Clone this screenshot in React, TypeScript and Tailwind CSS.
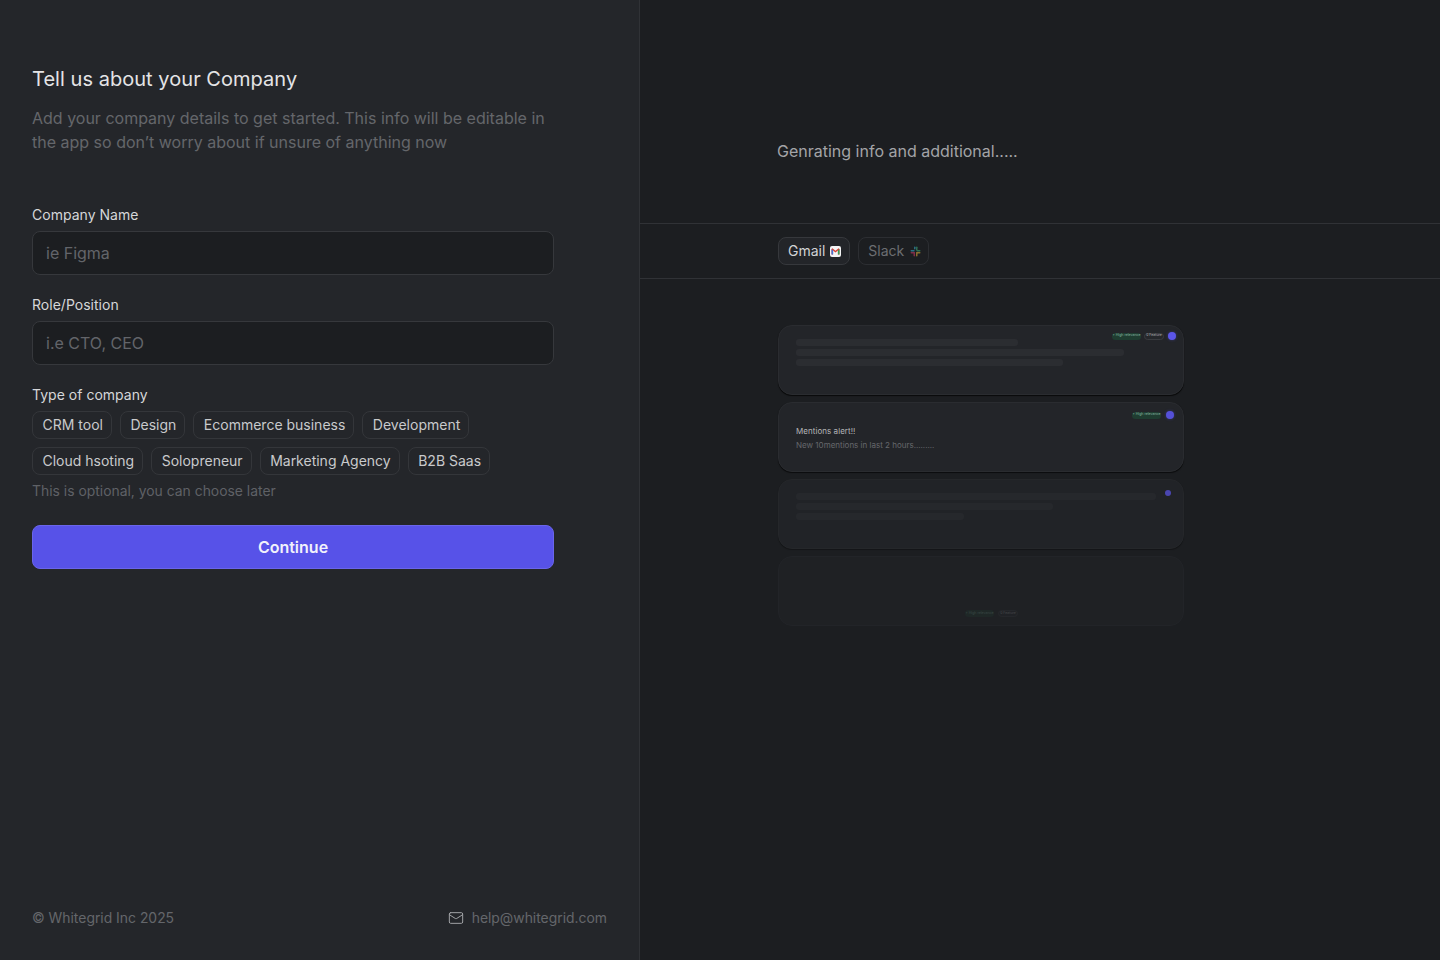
import React from "react";
import { Mail } from "lucide-react";

const row1 = ["CRM tool", "Design", "Ecommerce business", "Development"];
const row2 = ["Cloud hsoting", "Solopreneur", "Marketing Agency", "B2B Saas"];

function Chip({ label }: { label: string }) {
  return (
    <span className="flex h-7 items-center rounded-lg border border-[#34363a] pl-[9.5px] pr-[8px] text-sm leading-5 text-[#c9cacc]">
      {label}
    </span>
  );
}

function Field({ label, placeholder }: { label: string; placeholder: string }) {
  return (
    <div>
      <div className="h-5 text-sm font-normal leading-5 tracking-[0.02px] text-[#d6d7d9]">{label}</div>
      <div className="mt-[6px] flex h-11 items-center rounded-lg border border-[#36383c] bg-[#1c1e21] px-[13px] text-base text-[#63656a]">
        {placeholder}
      </div>
    </div>
  );
}

function GmailIcon() {
  return (
    <svg width="11" height="11" viewBox="0 0 11 11" aria-hidden="true">
      <rect width="11" height="11" rx="2" fill="#f4f4f5" />
      <path d="M1.5 3v5.5h1.6V4.6L5.5 6.4l2.4-1.8v3.9h1.6V3L8.6 2.3 5.5 4.7 2.4 2.3Z" fill="#d93f33" />
      <path d="M7.9 4.6 9.5 3v5.5H7.9Z" fill="#2f9e5b" />
      <path d="M1.5 3l1.6 1.6v3.9H1.5Z" fill="#3f74d8" />
    </svg>
  );
}

function SlackIcon() {
  return (
    <svg width="11" height="11" viewBox="0 0 11 11" aria-hidden="true" className="opacity-60">
      <rect x="0.5" y="4" width="4.2" height="1.5" rx="0.75" fill="#36a9c9" />
      <rect x="4" y="0.5" width="1.5" height="3" rx="0.75" fill="#36a9c9" />
      <rect x="6" y="0.5" width="1.5" height="4.2" rx="0.75" fill="#3aa675" />
      <rect x="6.5" y="4" width="4" height="1.5" rx="0.75" fill="#3aa675" />
      <rect x="6" y="6" width="4.5" height="1.5" rx="0.75" fill="#d6a53a" />
      <rect x="6" y="6.5" width="1.5" height="4" rx="0.75" fill="#d6a53a" />
      <rect x="3.5" y="6" width="1.5" height="4.5" rx="0.75" fill="#c23a63" />
      <rect x="0.5" y="6" width="4.5" height="1.5" rx="0.75" fill="#c23a63" />
    </svg>
  );
}

function GreenBadge() {
  return (
    <span className="flex h-[7px] w-[29px] items-center justify-center rounded-full bg-[#1f3d31] text-[3.5px] leading-none text-[#86b8a0]">
      + High relevance
    </span>
  );
}

function GrayBadge() {
  return (
    <span className="flex h-[7px] w-[20px] items-center justify-center rounded-full border-[0.5px] border-[#3a3c40] bg-[#26282c] text-[3.5px] leading-none text-[#b0b1b4]">
      0 Feature
    </span>
  );
}

function Dot({ className }: { className: string }) {
  return <span className={`block rounded-full ${className}`} />;
}

function Lines({ widths, tone }: { widths: string[]; tone: string }) {
  return (
    <div className="flex flex-col gap-[3px]">
      {widths.map((w) => (
        <div key={w} className={`h-[7px] rounded-[3px] ${tone} ${w}`} />
      ))}
    </div>
  );
}

const cardBase = "relative h-[70px] w-[406px] rounded-[14px] border";

export default function App() {
  return (
    <div
      className="flex h-[960px] w-[1440px] overflow-hidden bg-[#1c1e21]"
      style={{ fontFamily: '"Inter", "Liberation Sans", sans-serif' }}
    >
      {/* Left panel */}
      <div className="flex h-full w-[640px] flex-col border-r border-[#303236] bg-[#24262a] pl-8 pr-8">
        <h1 className="mt-[66px] text-xl font-normal leading-[26px] tracking-[0.04px] text-[#e4e4e6]">
          Tell us about your Company
        </h1>
        <p className="mt-[14px] w-[522px] text-base leading-6 text-[#64666b]">
          Add your company details to get started. This info will be editable in the app so don’t worry about if unsure of anything now
        </p>

        <div className="mt-[51px] flex w-[522px] flex-col gap-5">
          <Field label="Company Name" placeholder="ie Figma" />
          <Field label="Role/Position" placeholder="i.e CTO, CEO" />
        </div>

        <div className="mt-5 w-[522px]">
          <div className="h-5 text-sm font-normal leading-5 tracking-[0.02px] text-[#d6d7d9]">Type of company</div>
          <div className="mt-[6px] flex gap-2">
            {row1.map((c) => (
              <Chip key={c} label={c} />
            ))}
          </div>
          <div className="mt-2 flex gap-2">
            {row2.map((c) => (
              <Chip key={c} label={c} />
            ))}
          </div>
          <div className="mt-[6px] h-5 text-[13.9px] leading-5 text-[#5f6166]">
            This is optional, you can choose later
          </div>
          <button className="mt-6 flex h-11 w-full items-center justify-center rounded-lg border border-[#6a65ea] bg-[#5752e8] text-base font-semibold text-[#f1f1fb]">
            Continue
          </button>
        </div>

        <div className="mb-[32px] mt-auto flex h-5 items-center justify-between text-[13.9px] text-[#64666b]">
          <span>© Whitegrid Inc 2025</span>
          <span className="flex items-center gap-2">
            <Mail size={16} strokeWidth={1.5} className="text-[#a0a2a5]" />
            help@whitegrid.com
          </span>
        </div>
      </div>

      {/* Right panel */}
      <div className="flex h-full flex-1 flex-col">
        <div className="h-[224px] border-b border-[#303236] pl-[137px] pt-[140px] text-base leading-[22px] text-[#a3a4a7]">
          Genrating info and additional.....
        </div>
        <div className="flex h-[55px] items-center gap-2 border-b border-[#303236] pl-[138px]">
          <span className="flex h-7 items-center gap-[5px] rounded-lg border border-[#36383c] bg-[#232529] pl-[9px] pr-[8px] text-sm text-[#d2d3d5]">
            Gmail
            <GmailIcon />
          </span>
          <span className="flex h-7 items-center gap-[6px] rounded-lg border border-[#2c2e32] pl-[9px] pr-[7px] text-sm text-[#6c6e72]">
            Slack
            <SlackIcon />
          </span>
        </div>

        <div className="flex flex-col gap-[7px] pl-[138px] pt-[46px]">
          <div className={`${cardBase} border-[#2a2c30] bg-[#232529] px-[17px] pt-[13px] shadow-[0_1px_1px_rgba(0,0,0,0.7)]`}>
            <Lines widths={["w-[222px]", "w-[328px]", "w-[267px]"]} tone="bg-[#2b2d31]" />
            <div className="absolute right-[7px] top-[6px] flex items-center gap-[3px]">
              <GreenBadge />
              <GrayBadge />
              <Dot className="ml-[1px] h-[8px] w-[8px] bg-[#5b55e8] shadow-[0_0_3px_rgba(91,85,232,0.4)]" />
            </div>
          </div>

          <div className={`${cardBase} border-[#2a2c30] bg-[#232529] px-[17px] pt-[23px] shadow-[0_1px_1px_rgba(0,0,0,0.6)]`}>
            <div className="text-[8px] font-normal leading-[11px] tracking-[0.05px] text-[#b5b6b8]">Mentions alert!!</div>
            <div className="mt-[3px] text-[8px] leading-[11px] text-[#66686c]">
              New 10mentions in last 2 hours.........
            </div>
            <div className="absolute right-[9px] top-[8px] flex items-center gap-[5px]">
              <GreenBadge />
              <Dot className="h-[8px] w-[8px] bg-[#5550d8] shadow-[0_0_3px_rgba(91,85,232,0.4)]" />
            </div>
          </div>

          <div className={`${cardBase} border-[#25272a] bg-[#212327] px-[17px] pt-[13px] shadow-[0_1px_1px_rgba(0,0,0,0.3)]`}>
            <Lines widths={["w-[360px]", "w-[257px]", "w-[168px]"]} tone="bg-[#26282c]" />
            <div className="absolute right-[12px] top-[10px]">
              <Dot className="h-[6px] w-[6px] bg-[#4a46b0]" />
            </div>
          </div>

          <div className={`${cardBase} border-[#222428] bg-[#1f2124]`}>
            <div className="absolute left-[186px] top-[53px] flex items-center gap-[4px] opacity-25">
              <GreenBadge />
              <GrayBadge />
            </div>
          </div>
        </div>
      </div>
    </div>
  );
}
